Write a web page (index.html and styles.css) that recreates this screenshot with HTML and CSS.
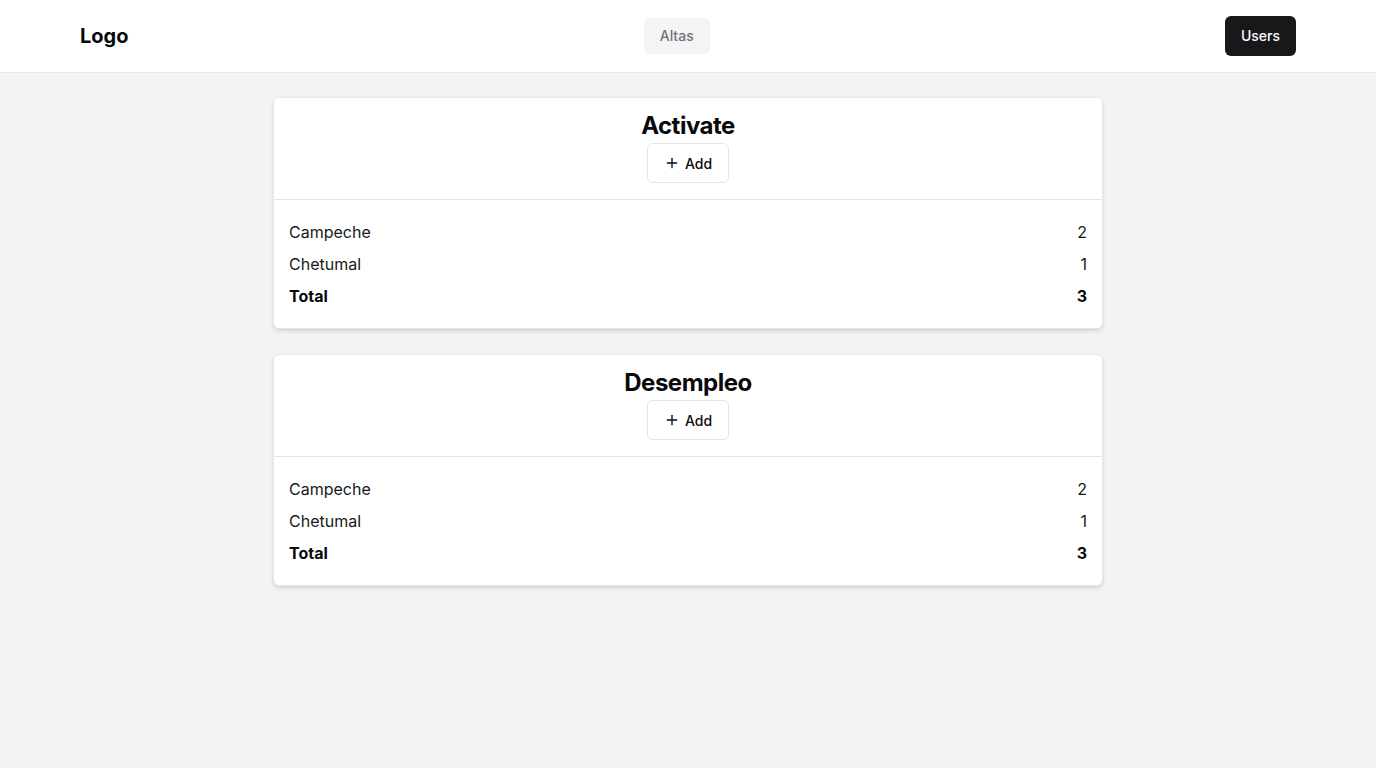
FILE: index.html
```html
<!DOCTYPE html>
<html lang="es">
<head>
<meta charset="utf-8">
<title>Altas</title>
<link rel="stylesheet" href="styles.css">
</head>
<body>
<header class="topbar">
  <div class="logo">Logo</div>
  <nav class="nav"><a class="nav-link" href="#">Altas</a></nav>
  <a class="btn-dark" href="#">Users</a>
</header>
<main class="content">
  <section class="card">
    <div class="card-head">
      <h2 class="card-title">Activate</h2>
      <button class="btn-outline" type="button">
        <svg class="icon" viewBox="0 0 24 24" width="16" height="16" fill="none" stroke="currentColor" stroke-width="2" stroke-linecap="round" stroke-linejoin="round"><path d="M5 12h14"/><path d="M12 5v14"/></svg>
        <span>Add</span>
      </button>
    </div>
    <div class="card-body">
      <div class="row"><span>Campeche</span><span>2</span></div>
      <div class="row"><span>Chetumal</span><span>1</span></div>
      <div class="row total"><span>Total</span><span>3</span></div>
    </div>
  </section>
  <section class="card">
    <div class="card-head">
      <h2 class="card-title">Desempleo</h2>
      <button class="btn-outline" type="button">
        <svg class="icon" viewBox="0 0 24 24" width="16" height="16" fill="none" stroke="currentColor" stroke-width="2" stroke-linecap="round" stroke-linejoin="round"><path d="M5 12h14"/><path d="M12 5v14"/></svg>
        <span>Add</span>
      </button>
    </div>
    <div class="card-body">
      <div class="row"><span>Campeche</span><span>2</span></div>
      <div class="row"><span>Chetumal</span><span>1</span></div>
      <div class="row total"><span>Total</span><span>3</span></div>
    </div>
  </section>
</main>
</body>
</html>
```
FILE: styles.css
```css
* { box-sizing: border-box; }
html, body { margin: 0; padding: 0; }
body {
  font-family: Inter, "Liberation Sans", sans-serif;
  background: #f2f3f5;
  color: #09090b;
  min-height: 100vh;
}
.topbar {
  height: 73px;
  background: #ffffff;
  border-bottom: 1px solid #e5e7eb;
  display: flex;
  align-items: center;
  justify-content: space-between;
  padding: 0 80px;
}
.logo {
  font-size: 20px;
  font-weight: 700;
  line-height: 28px;
}
.nav { display: flex; }
.nav-link {
  display: inline-flex;
  align-items: center;
  height: 36px;
  padding: 0 16px;
  border-radius: 6px;
  background: #f4f4f5;
  color: #71717a;
  font-size: 14px;
  font-weight: 500;
  text-decoration: none;
  margin-top: -1px;
}
.btn-dark {
  display: inline-flex;
  align-items: center;
  height: 40px;
  padding: 0 16px;
  border-radius: 6px;
  background: #18181b;
  color: #fafafa;
  font-size: 14px;
  font-weight: 500;
  text-decoration: none;
  margin-top: -1px;
}
.content {
  width: 830px;
  margin: 0 auto;
  padding-top: 24px;
  display: flex;
  flex-direction: column;
  gap: 25px;
}
.card {
  background: #ffffff;
  border: 1px solid #e8e8eb;
  border-radius: 6px;
  box-shadow: 0 3px 5px -1px rgba(0,0,0,0.10), 0 1px 3px rgba(0,0,0,0.07);
}
.card-head {
  display: flex;
  flex-direction: column;
  align-items: center;
  padding: 12px 16px 16px;
  border-bottom: 1px solid #e4e4e7;
}
.card-title {
  margin: 0 0 1px;
  font-size: 24px;
  line-height: 32px;
  font-weight: 700;
  letter-spacing: -0.5px;
}
.btn-outline {
  display: inline-flex;
  align-items: center;
  gap: 5px;
  height: 40px;
  padding: 0 16px;
  background: #ffffff;
  border: 1px solid #e4e4e7;
  border-radius: 6px;
  color: #09090b;
  font-family: inherit;
  font-size: 14px;
  font-weight: 500;
}
.icon { display: block; }
.card-body {
  padding: 20px 15px 20px;
  display: flex;
  flex-direction: column;
  gap: 8px;
}
.row {
  display: flex;
  justify-content: space-between;
  font-size: 16px;
  line-height: 24px;
  color: #18181b;
}
.row.total { font-weight: 700; color: #09090b; }
```
